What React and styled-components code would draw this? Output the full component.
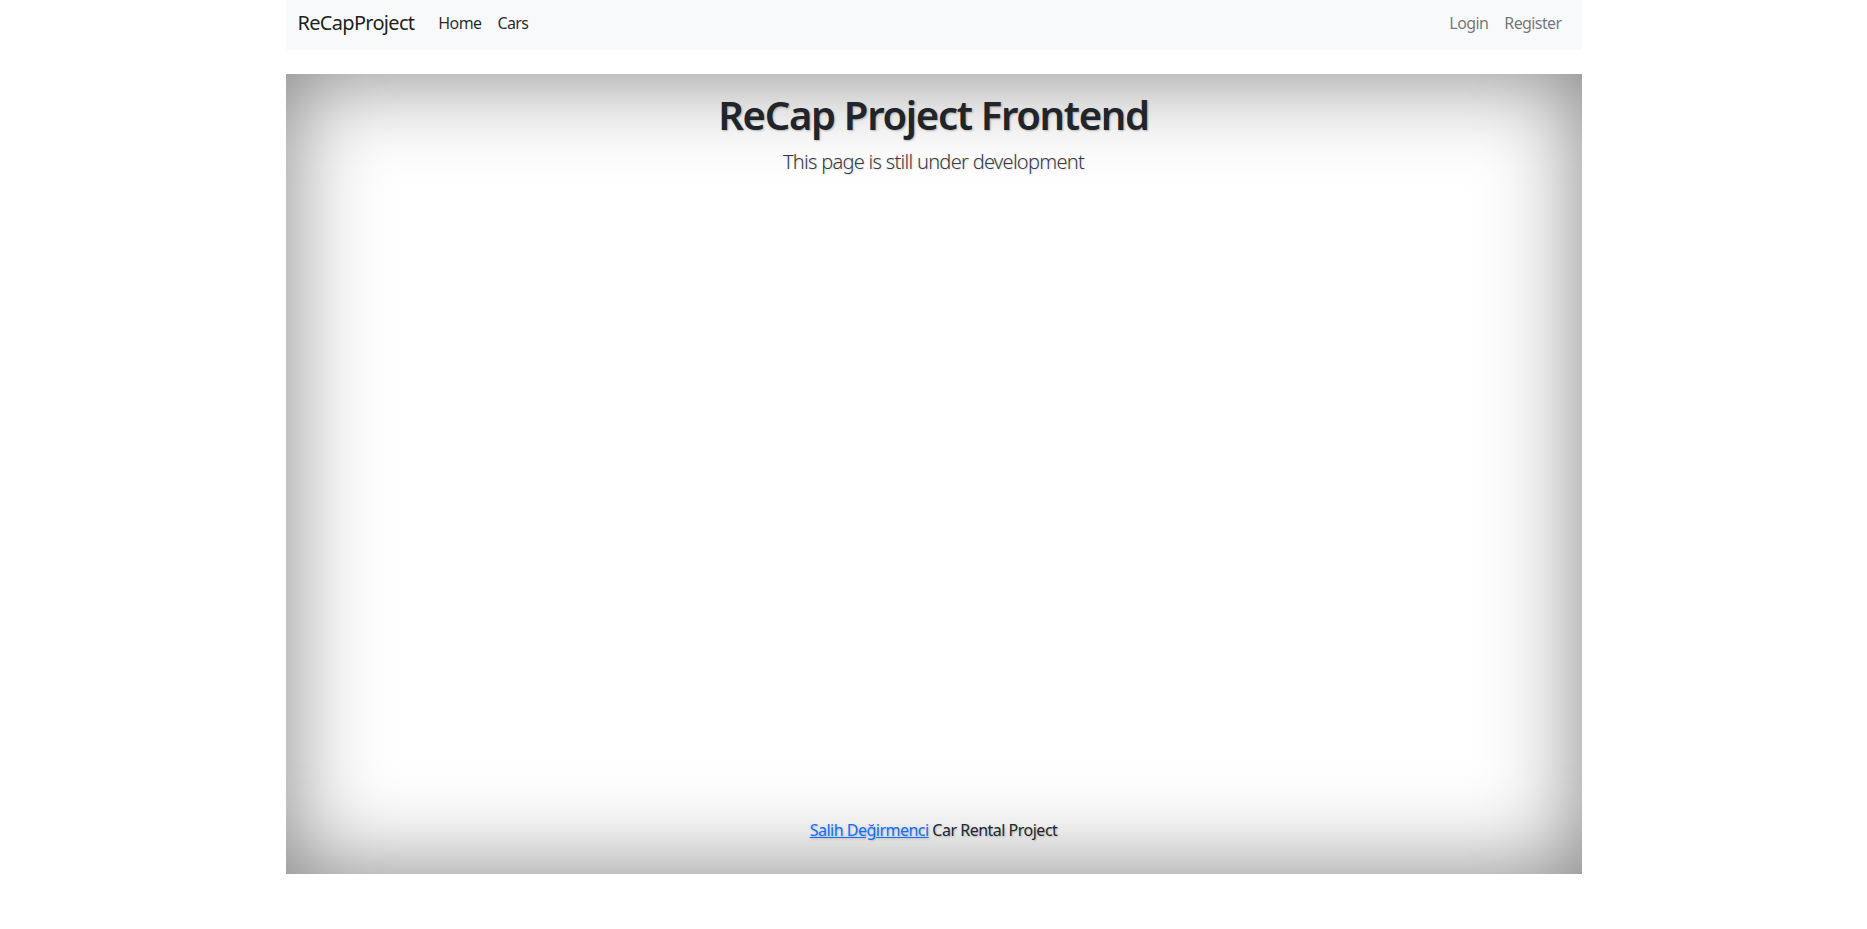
import React from 'react'
import styled, { createGlobalStyle } from 'styled-components'

const GlobalStyle = createGlobalStyle`
* { box-sizing: border-box; }
body {
    margin: 0;
    font-family: "Noto Sans", "Open Sans", sans-serif;
    font-size: 16px;
    line-height: 1.5;
    color: #212529;
    background: #fff;
}
`

const Container = styled.div`
max-width: 1320px;
margin: 0 auto;
padding: 0 12px;
`

const Nav = styled.nav`
display: flex;
align-items: center;
justify-content: space-between;
height: 50px;
padding: 0 12px 4px;
background: #f8f9fa;
`

const Left = styled.div`
display: flex;
align-items: center;
`

const Brand = styled.a`
font-size: 20px;
letter-spacing: -0.7px;
color: rgba(0, 0, 0, 0.9);
text-decoration: none;
margin-right: 16px;
cursor: pointer;
`

const Links = styled.ul`
display: flex;
list-style: none;
margin: 0;
padding: 0;
`

const NavLink = styled.a`
display: block;
padding: 8px;
font-size: 16px;
letter-spacing: -0.6px;
color: ${(props) => (props.muted ? 'rgba(0, 0, 0, 0.55)' : 'rgba(0, 0, 0, 0.85)')};
text-decoration: none;
cursor: pointer;
`

const Stage = styled.main`
display: flex;
flex-direction: column;
align-items: center;
height: 800px;
margin-top: 24px;
padding: 17px 0 32px;
box-shadow: inset 0 0 95px rgba(0, 0, 0, 0.5);
text-align: center;
`

const Title = styled.h1`
margin: 0 0 8px;
font-size: 40px;
font-weight: 600;
letter-spacing: -1.3px;
line-height: 1.2;
color: #212529;
text-shadow: 1px 1px 2px rgba(0, 0, 0, 0.25);
`

const Lead = styled.p`
margin: 0;
font-size: 20px;
font-weight: 300;
letter-spacing: -0.7px;
color: #343a40;
text-shadow: 1px 1px 2px rgba(0, 0, 0, 0.15);
`

const Footer = styled.footer`
margin-top: auto;
font-size: 16px;
letter-spacing: -0.5px;
line-height: 24px;
color: #212529;
text-shadow: 1px 1px 2px rgba(0, 0, 0, 0.2);
`

const Author = styled.a`
color: #0d6efd;
text-decoration: underline;
cursor: pointer;
`

function App() {
    return (
        <React.Fragment>
            <GlobalStyle />
            <Container>
                <Nav>
                    <Left>
                        <Brand>ReCapProject</Brand>
                        <Links>
                            <li><NavLink>Home</NavLink></li>
                            <li><NavLink>Cars</NavLink></li>
                        </Links>
                    </Left>
                    <Links>
                        <li><NavLink muted>Login</NavLink></li>
                        <li><NavLink muted>Register</NavLink></li>
                    </Links>
                </Nav>
                <Stage>
                    <Title>ReCap Project Frontend</Title>
                    <Lead>This page is still under development</Lead>
                    <Footer>
                        <Author>Salih Değirmenci</Author> Car Rental Project
                    </Footer>
                </Stage>
            </Container>
        </React.Fragment>
    )
}

export default App
